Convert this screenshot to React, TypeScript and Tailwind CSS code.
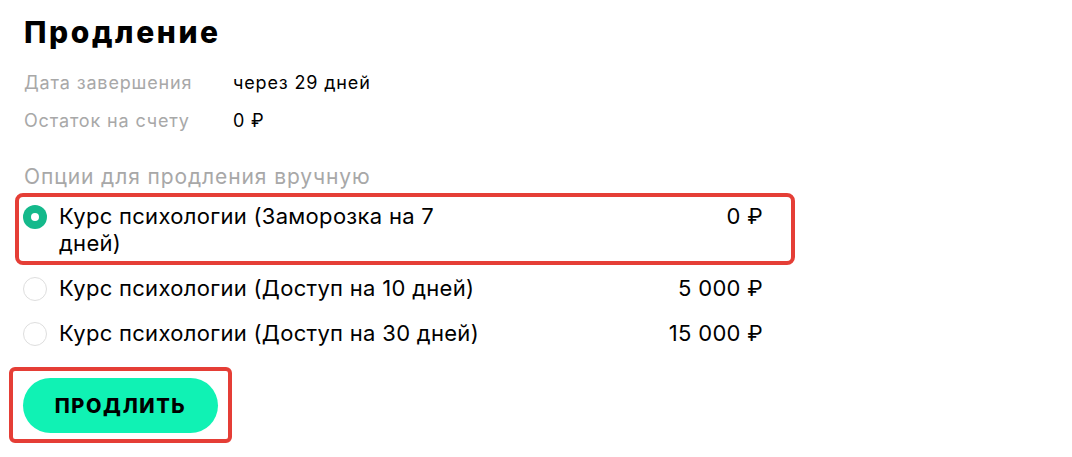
import React from "react";

const options = [
  { label: "Курс психологии (Заморозка на 7 дней)", price: "0 ₽", selected: true },
  { label: "Курс психологии (Доступ на 10 дней)", price: "5 000 ₽", selected: false },
  { label: "Курс психологии (Доступ на 30 дней)", price: "15 000 ₽", selected: false },
];

function Radio({ selected }: { selected: boolean }) {
  return selected ? (
    <span className="flex h-6 w-6 shrink-0 items-center justify-center rounded-full bg-[#14b98b]">
      <span className="h-2 w-2 rounded-full bg-white" />
    </span>
  ) : (
    <span className="h-6 w-6 shrink-0 rounded-full border border-[#dedede] bg-white" />
  );
}

export default function App() {
  return (
    <div
      className="min-h-[457px] w-[1072px] bg-white pl-6 pt-[14px] text-black"
      style={{ fontFamily: "Inter, 'Noto Sans', sans-serif" }}
    >
      <h1 className="text-[30px] font-extrabold leading-[36px] tracking-[2.6px]">Продление</h1>

      <div className="mt-[21px] flex flex-col gap-[14px] text-[18px] leading-[24px] tracking-[0.85px]">
        <div className="flex">
          <span className="w-[209px] text-[#a8a8a8]">Дата завершения</span>
          <span>через 29 дней</span>
        </div>
        <div className="flex">
          <span className="w-[209px] text-[#a8a8a8]">Остаток на счету</span>
          <span>0 ₽</span>
        </div>
      </div>

      <div className="mt-[30px] text-[21px] leading-[28px] tracking-[0.9px] text-[#a8a8a8]">
        Опции для продления вручную
      </div>

      <div className="mt-[12px] flex w-[739px] flex-col gap-[18px] text-[22px] leading-[27px] tracking-[0.3px]">
        {options.map((o) => (
          <div key={o.label} className="relative -ml-px flex items-start">
            {o.selected && (
              <span className="pointer-events-none absolute -bottom-2 -left-2 -right-8 -top-[10px] rounded-lg border-4 border-[#e53e36]" />
            )}
            <div className="flex h-[27px] items-center">
              <Radio selected={o.selected} />
            </div>
            <span className="ml-3 w-[425px]">{o.label}</span>
            <span className="ml-auto">{o.price}</span>
          </div>
        ))}
      </div>

      <div className="relative mt-[31px] inline-block">
        <span className="pointer-events-none absolute -bottom-[10px] -left-[15px] -right-[14px] -top-[11px] rounded-md border-4 border-[#e53e36]" />
        <button className="-ml-px flex h-[55px] w-[195px] items-center justify-center rounded-full bg-[#10f2b4] text-[20px] font-extrabold uppercase tracking-[1.6px] text-black">
          Продлить
        </button>
      </div>
    </div>
  );
}
